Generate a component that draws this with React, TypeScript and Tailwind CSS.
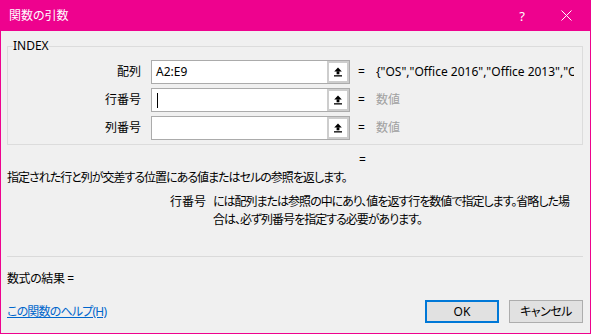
import React from "react";

const font = {
  fontFamily: '"Noto Sans", "Noto Sans CJK JP", sans-serif',
};

function RefIcon() {
  return (
    <svg width="10" height="10" viewBox="0 0 10 10">
      <polygon points="5,0.5 1.2,4.5 8.8,4.5" fill="#000" />
      <rect x="3.6" y="4.3" width="2.8" height="3" fill="#000" />
      <rect x="1" y="8.2" width="8" height="1.3" fill="#000" />
    </svg>
  );
}

function ArgRow({ label, value, hint, caret }: { label: string; value?: string; hint?: string; caret?: boolean }) {
  return (
    <div className="flex h-[24px] items-center">
      <div className="w-[133px] shrink-0 text-right text-[12px] leading-[16px] text-black">{label}</div>
      <div className="ml-[10px] flex h-[24px] w-[199px] shrink-0 border border-[#ABABAB] bg-white">
        <div className="flex flex-1 items-center pl-[4px] text-[12px] leading-[16px] text-black">
          {value}
          {caret && <span className="ml-[1px] inline-block h-[15px] w-px bg-black" />}
        </div>
        <div className="flex w-[22px] items-center justify-center border-2 border-[#CDCDCD] bg-white">
          <RefIcon />
        </div>
      </div>
      <div className="ml-[8px] w-[18px] shrink-0 text-[12px] leading-[16px] text-black">=</div>
      <div className="w-[198px] shrink-0 overflow-hidden whitespace-nowrap text-[12px] leading-[16px]">
        {hint ? (
          <span className="text-[#A0A0A0]">{hint}</span>
        ) : (
          <span className="text-black">{'{"OS","Office 2016","Office 2013","Office 2010"}'}</span>
        )}
      </div>
    </div>
  );
}

export default function App() {
  return (
    <div
      className="flex h-[334px] w-[591px] flex-col overflow-hidden [font-feature-settings:'palt']"
      style={font}
    >
      <div className="flex h-[31px] shrink-0 items-center bg-[#EE028E] pl-[9px] text-white">
        <div className="text-[12px] leading-[16px]">関数の引数</div>
        <div className="ml-auto mr-[36px] text-[13px] leading-[16px]">?</div>
        <svg className="mr-[19px]" width="11" height="11" viewBox="0 0 11 11">
          <path d="M0.5 0.5 L10.5 10.5 M10.5 0.5 L0.5 10.5" stroke="#fff" strokeWidth="1" />
        </svg>
      </div>
      <div className="flex flex-1 flex-col border-x border-b border-[#EE028E] bg-[#F0F0F0] pl-[6px] pr-[7px] text-black">
        <fieldset className="mt-[7px] w-[576px] border border-[#DCDCDC] px-0 pb-[4px] pt-[6px]">
          <legend className="ml-[5px] p-0 text-[12px] leading-[16px] text-black">INDEX</legend>
          <div className="flex flex-col gap-[4px]">
            <ArgRow label="配列" value="A2:E9" />
            <ArgRow label="行番号" caret hint="数値" />
            <ArgRow label="列番号" hint="数値" />
          </div>
        </fieldset>
        <div className="mt-[7px] pl-[352px] text-[12px] leading-[16px]">=</div>
        <div className="mt-[2px] whitespace-nowrap text-[12px] leading-[16px] tracking-[-1px]">
          指定された行と列が交差する位置にある値またはセルの参照を返します。
        </div>
        <div className="mt-[7px] flex pl-[162px] text-[12px] leading-[18px]">
          <div className="w-[44px] shrink-0 whitespace-nowrap pl-[1px]">行番号</div>
          <div className="whitespace-nowrap tracking-[-1px]">
            <div>には配列または参照の中にあり、値を返す行を数値で指定します。省略した場</div>
            <div>合は、必ず列番号を指定する必要があります。</div>
          </div>
        </div>
        <div className="mt-[27px] h-px w-[576px] bg-[#DADADA]" />
        <div className="mt-[14px] text-[12px] leading-[16px] tracking-[-0.4px]">数式の結果 =</div>
        <div className="mt-[13px] flex h-[23px] items-center">
          <a className="text-[12px] leading-[16px] tracking-[-0.8px] text-[#0066CC] underline" href="#">
            この関数のヘルプ(H)
          </a>
          <div className="ml-auto flex gap-[10px]">
            <button className="flex h-[23px] w-[74px] items-center justify-center border-2 border-[#0078D7] bg-[#E1E1E1] text-[12px] leading-[16px] text-black">
              OK
            </button>
            <button className="flex h-[23px] w-[74px] items-center justify-center border border-[#ADADAD] bg-[#E1E1E1] text-[12px] leading-[16px] tracking-[-0.5px] text-black">
              キャンセル
            </button>
          </div>
        </div>
      </div>
    </div>
  );
}
